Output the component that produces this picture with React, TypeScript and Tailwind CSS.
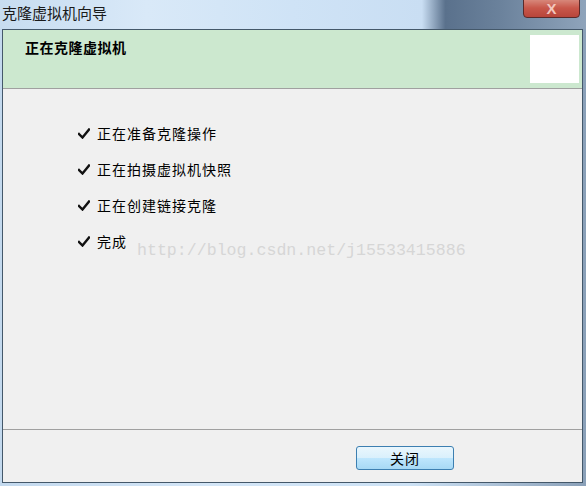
import React from 'react';

const steps = ['正在准备克隆操作', '正在拍摄虚拟机快照', '正在创建链接克隆', '完成'];

const cjk = { fontFamily: '"Noto Sans CJK SC", "Noto Sans", sans-serif' };

const CheckMark = () => (
  <svg width="12" height="11" viewBox="0 0 12 11" className="shrink-0">
    <path d="M1 6 L4.5 9.5 L11 1.5" fill="none" stroke="#111" strokeWidth="2.4" strokeLinecap="square" />
  </svg>
);

const App: React.FC = () => {
  return (
    <div
      className="relative w-[586px] h-[486px] overflow-hidden flex flex-col bg-[linear-gradient(90deg,#c3d9ee_0%,#d4e6f7_35%,#cde2f5_70%,#8aa0b8_100%)]"
      style={cjk}
    >
      {/* Title bar */}
      <div className="relative h-[29px] shrink-0 bg-[linear-gradient(90deg,#c7dcf0_0%,#d9e9f8_25%,#cfe3f6_50%,#c9def3_72%,#5a718c_76%,#6a819b_85%,#8fa4bb_100%)]">
        <span className="absolute left-[2px] top-[3px] text-[15px] leading-[20px] text-[#1a1a1a]">克隆虚拟机向导</span>
        <div className="absolute left-[523px] top-[-2px] w-[57px] h-[20px] rounded-b-[4px] border border-[#5a2a2a] bg-[linear-gradient(180deg,#d98d80_0%,#c8574a_50%,#b8453a_100%)] flex items-center justify-center">
          <span className="text-[15px] font-bold text-[#f2c6be] leading-none" style={{ fontFamily: '"Liberation Sans", sans-serif' }}>X</span>
        </div>
      </div>

      {/* Client area */}
      <div className="flex-1 ml-[2px] mr-[3px] mb-[3px] border border-[#44586a] bg-[#f0f0f0] flex flex-col">
        <div className="h-[59px] shrink-0 bg-[#cce8cf] border-b border-[#a0a0a0] flex justify-between">
          <div className="pl-[22px] pt-[8px] text-[14px] font-bold leading-[18px] text-black tracking-[0.5px]">正在克隆虚拟机</div>
          <div className="w-[49px] h-[48px] mt-[5px] mr-[3px] bg-white" />
        </div>

        <div className="relative flex-1 flex flex-col gap-[18px] pl-[75px] pt-[35px] border-b border-[#a0a0a0]">
          {steps.map((s) => (
            <div key={s} className="flex items-center gap-[7px] h-[18px]">
              <CheckMark />
              <span className="text-[14px] leading-[18px] text-black tracking-[1px]">{s}</span>
            </div>
          ))}
          <div
            className="absolute left-[134px] top-[152px] text-[16.6px] leading-[20px] text-[#d6d6d6]"
            style={{ fontFamily: '"Liberation Mono", monospace' }}
          >
            http://blog.csdn.net/j15533415886
          </div>
        </div>

        <div className="h-[52px] shrink-0 flex items-start pl-[353px] pt-[16px]">
          <button className="w-[98px] h-[24px] rounded-[3px] border border-[#3c7fb1] bg-[linear-gradient(180deg,#eaf6fd_0%,#d9f0fc_50%,#bee6fd_51%,#a7d9f5_100%)] text-[14px] leading-none text-black tracking-[1px]">
            关闭
          </button>
        </div>
      </div>
    </div>
  );
};

export default App;
